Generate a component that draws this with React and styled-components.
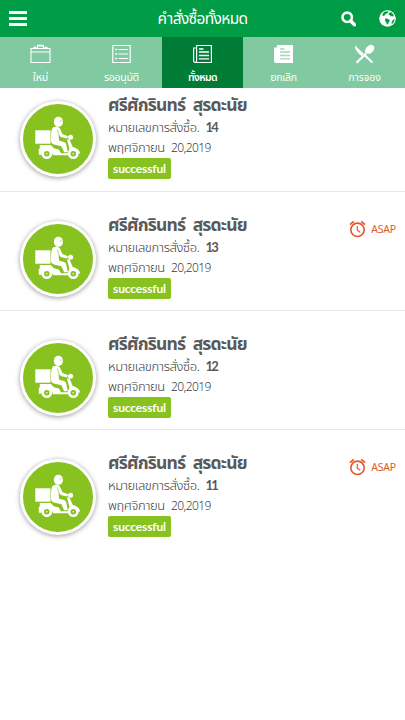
import React from 'react'
import styled, { createGlobalStyle } from 'styled-components'

const GlobalStyle = createGlobalStyle`
    * {
        box-sizing: border-box;
    }

    body {
        margin: 0;
        background: #fff;
        font-family: Lato, "Noto Sans", "Noto Sans Thai", sans-serif;
    }
`

const Page = styled.div`
    min-height: 720px;
    overflow: hidden;
`

const Header = styled.header`
    display: flex;
    align-items: center;
    height: 37px;
    padding: 0 9px;
    background: #019c46;
    color: #fff;
`

const HeaderSide = styled.div`
    flex: 1;
    display: flex;
    align-items: center;
    justify-content: ${props => props.$end ? 'flex-end' : 'flex-start'};
    gap: 23px;

    svg {
        display: block;
    }
`

const Title = styled.h1`
    margin: 0;
    padding-bottom: 1px;
    font-size: 15.5px;
    font-weight: 400;
    line-height: 34px;
    white-space: nowrap;
    letter-spacing: -0.65px;
`

const Tabs = styled.nav`
    display: grid;
    grid-template-columns: 81px 81px 81px 81px 81px;
    height: 51px;
`

const Tab = styled.a`
    display: flex;
    flex-direction: column;
    align-items: center;
    padding-top: 7px;
    color: #fff;
    background: ${props => props.$active ? '#017c37' : '#80c9a1'};

    svg {
        display: block;
    }
`

const TabLabel = styled.span`
    margin-top: 4px;
    font-size: 10.5px;
    font-weight: ${props => props.$active ? 600 : 400};
    line-height: 18px;
    white-space: nowrap;
    letter-spacing: ${props => props.$spacing || 0}px;
`

const OrderRow = styled.article`
    display: flex;
    align-items: flex-start;
    height: 119px;
    padding: 21px 9px 0 20px;
    border-bottom: 1px solid #e6e6e6;

    &:first-child {
        height: 104px;
        padding-top: 5px;
    }

    &:last-child {
        border-bottom: 0;
    }
`

const Avatar = styled.div`
    flex: none;
    width: 76px;
    height: 76px;
    margin-top: 8px;
    border: 3px solid #fff;
    border-radius: 50%;
    background: #88c220;
    box-shadow: 0 1px 5px rgba(0, 0, 0, 0.4);

    svg {
        display: block;
    }
`

const Details = styled.div`
    flex: 1;
    padding-left: 12px;
    color: #595959;
    white-space: nowrap;
`

const Name = styled.h2`
    margin: 0;
    font-size: 17.5px;
    font-weight: 700;
    line-height: 24px;
    letter-spacing: -0.82px;
    word-spacing: 4px;
`

const Line = styled.div`
    height: 20px;
    color: #3c3c3c;
    font-size: 13px;
    font-weight: 300;
    line-height: 20px;
    letter-spacing: -0.4px;
    word-spacing: 3px;

    b {
        color: #595959;
        font-weight: 700;
        letter-spacing: -1.8px;
    }
`

const DateText = styled.span`
    font-family: "Noto Sans", sans-serif;
    font-size: 12px;
    letter-spacing: -0.6px;
`

const Badge = styled.span`
    display: block;
    width: 63px;
    height: 21px;
    margin-top: 1px;
    border-radius: 2px;
    background: #88c220;
    color: #fff;
    font-size: 12px;
    font-weight: 700;
    line-height: 21px;
    letter-spacing: -0.15px;
    text-align: center;
`

const Asap = styled.div`
    display: flex;
    align-items: center;
    gap: 5px;
    height: 20px;
    margin-top: 6px;
    color: #e4572e;
    font-family: "Noto Sans", sans-serif;
    font-size: 10.5px;
    font-weight: 400;
    letter-spacing: -0.2px;
`

const MenuIcon = () => (
    <svg width="18" height="15" viewBox="0 0 18 15" fill="#fff">
        <path d="M0 0h18v3H0zM0 6h18v3H0zM0 12h18v3H0z" />
    </svg>
)

const SearchIcon = () => (
    <svg width="15" height="16" viewBox="0 0 15 16" fill="none" stroke="#fff">
        <circle cx="6.2" cy="6.3" r="4.7" strokeWidth="2.6" />
        <path d="M9.7 10l3.8 3.8" strokeWidth="3.4" strokeLinecap="round" />
    </svg>
)

const GlobeIcon = () => (
    <svg width="17" height="17" viewBox="0 0 17 17">
        <circle cx="8.5" cy="8.5" r="8.3" fill="#fff" />
        <path d="M5.2 1.8l3.3-.6 1.1.7-1.2 1.4-1.7.6-1.2 1.7-1.5.6-.6-2zM9.8 3.3l2.3-1.2 2.7 3-.4 1.6-1.4-.7-1.4.6-.4-1.4-1.5-.3zM6.3 8.2l3 .8 1.7 1.7-1.2 1.5-.9 2-1.2.4-.3-2.2-1.4-1.7zM14 9.8l1.7-.7-.8 3-2 2.1-.4-1.8z" fill="#019c46" />
    </svg>
)

const BagIcon = () => (
    <svg width="21" height="20" viewBox="0 0 21 20" fill="none" stroke="#fff">
        <path d="M1 4.5h19v14H1zM1 8h19M7.5 4.2V1.6h6v2.6" strokeWidth="1.1" />
        <path d="M3.5 3.5h3M14.5 3.5h3M8 1.4h5" strokeWidth="1.5" />
    </svg>
)

const ListIcon = () => (
    <svg width="19" height="20" viewBox="0 0 19 20" fill="none" stroke="#fff">
        <path d="M.8 1.5h17.4v17H.8z" strokeWidth="1.2" />
        <path d="M3.2 5.5h2M3.2 10h2M3.2 14.5h2" strokeWidth="1.6" />
        <path d="M6.5 5.5h9.5M6.5 10h9.5M6.5 14.5h9.5" />
    </svg>
)

const NewsIcon = ({ filled }) => (
    <svg width="19" height="20" viewBox="0 0 19 20" fill={filled ? '#fff' : 'none'} stroke="#fff">
        <path d="M3.6 1.5h14.8v17H2.2C1.2 18.5.6 18 .6 17V4h3zM3.6 4v12.5c0 1-.5 1.8-1.3 1.8" strokeWidth="1.2" />
        <path d="M6 5h4.5M6 8h10M6 11.5h10M6 14.8h10" stroke={filled ? '#a5d8bc' : '#fff'} strokeWidth="1.3" />
    </svg>
)

const CutleryIcon = () => (
    <svg width="21" height="20" viewBox="0 0 21 20" fill="#fff">
        <path d="M12 9.5L2.5 18.8" stroke="#fff" strokeWidth="2.3" />
        <path d="M10 10.5l8.3 8" stroke="#fff" strokeWidth="2.3" />
        <path d="M11.4 8.8c-1-2.8.7-5.7 3.4-7.3 2.2-1.3 4.3-.6 5.1.8 1 1.7.2 4-1.5 5.6-1.7 1.6-4 2.3-5.6 1.7zM1 1.4L9.8 9.7l-2.2 2.2C4.6 9.4.3 5.5 1 1.4z" />
    </svg>
)

const AlarmIcon = () => (
    <svg width="17" height="18" viewBox="0 0 17 18" fill="none" stroke="#e4572e">
        <circle cx="8.5" cy="9.8" r="6.7" strokeWidth="1.6" />
        <path d="M1 4.6L4.8 1.4M12.2 1.4L16 4.6" strokeWidth="1.8" />
        <path d="M8.3 6v4.2l2.9 2" strokeWidth="1.2" />
    </svg>
)

const ScooterIcon = () => (
    <svg width="70" height="70" viewBox="23 104 70 70" fill="#fff">
        <rect x="35.3" y="130.3" width="15.2" height="13.4" />
        {/* helmet */}
        <ellipse cx="58.4" cy="121.8" rx="4.6" ry="5.1" />
        <path d="M59.5 121h3" stroke="#88c220" strokeWidth=".5" />
        {/* rider */}
        <path d="M53 127.6c2.2-1.3 5.6-.8 6.9.9l2.5 5.5 5.6 2.2-.8 2.2-6.700-1.400-2-1.900.6 5.600 5 1.200c1.300.4 1.900 1.500 2.200 2.800l1.500 7.600h-3.700l-2.700-6-7.500-1.800c-2.400-.8-3.200-3-3-5.800.2-3.600.2-9.400 2.100-11.100z" />
        <path d="M57.3 129.3l2 6.4 1.7 1.9" fill="none" stroke="#88c220" strokeWidth=".6" />
        {/* scooter */}
        <circle cx="70.6" cy="137.3" r="2.5" />
        <path d="M66.9 139.4h2.6l3.3 7.600c4 .8 7.200 3.600 7.300 6.600h-2.300c-1.400-3-7.400-3.500-8.900 1.600H53c-.6-5.600-10.200-6.400-11.500-.4h-2.700v-6h1v-3.900h11l3 3.300 5 1.400 2.200 3.600h6.700l1.700-4.600z" />
        <circle cx="46.8" cy="153.7" r="4.1" fill="#88c220" stroke="#fff" strokeWidth="2.6" />
        <circle cx="73.3" cy="153.7" r="4.1" fill="#88c220" stroke="#fff" strokeWidth="2.6" />
        <circle cx="46.8" cy="153.7" r=".8" />
        <circle cx="73.3" cy="153.7" r=".8" />
    </svg>
)

const tabs = [
    { label: 'ใหม่', icon: <BagIcon /> },
    { label: 'รออนุมัติ', icon: <ListIcon />, spacing: -0.3 },
    { label: 'ทั้งหมด', icon: <NewsIcon />, active: true, spacing: -0.6 },
    { label: 'ยกเลิก', icon: <NewsIcon filled />, spacing: -0.3 },
    { label: 'การจอง', icon: <CutleryIcon />, spacing: -0.1 },
]

const orders = [
    { number: 14 },
    { number: 13, asap: true },
    { number: 12 },
    { number: 11, asap: true },
]

export default function App() {
    return (
        <Page>
            <GlobalStyle />
            <Header>
                <HeaderSide><MenuIcon /></HeaderSide>
                <Title>คำสั่งซื้อทั้งหมด</Title>
                <HeaderSide $end>
                    <SearchIcon />
                    <GlobeIcon />
                </HeaderSide>
            </Header>
            <Tabs>
                {tabs.map(tab => (
                    <Tab key={tab.label} $active={tab.active}>
                        {tab.icon}
                        <TabLabel $active={tab.active} $spacing={tab.spacing}>{tab.label}</TabLabel>
                    </Tab>
                ))}
            </Tabs>
            <main>
                {orders.map(order => (
                    <OrderRow key={order.number}>
                        <Avatar><ScooterIcon /></Avatar>
                        <Details>
                            <Name>ศรีศักรินทร์ สุรดะนัย</Name>
                            <Line>หมายเลขการสั่งซื้อ. <b>{order.number}</b></Line>
                            <Line>พฤศจิกายน <DateText>20,2019</DateText></Line>
                            <Badge>successful</Badge>
                        </Details>
                        {order.asap && <Asap><AlarmIcon />ASAP</Asap>}
                    </OrderRow>
                ))}
            </main>
        </Page>
    )
}
